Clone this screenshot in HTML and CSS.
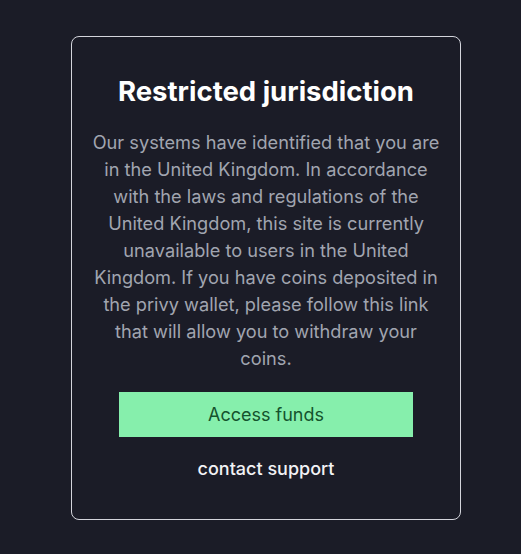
FILE: index.html
```html
<!DOCTYPE html>
<html lang="en">

<head>
    <meta charset="UTF-8">
    <meta name="viewport" content="width=device-width, initial-scale=1.0">
    <title>Restricted jurisdiction</title>
    <link rel="stylesheet" href="styles.css">
</head>

<body>
    <div class="card">
        <h1 class="title">Restricted jurisdiction</h1>
        <p class="message">Our systems have identified that you are in the United Kingdom. In accordance with the laws and regulations of the United Kingdom, this site is currently unavailable to users in the United Kingdom. If you have coins deposited in the privy wallet, please follow this link that will allow you to withdraw your coins.</p>
        <button class="access_btn" type="button">Access funds</button>
        <a class="support_link" href="#">contact support</a>
    </div>
</body>

</html>
```

FILE: styles.css
```css
body {
    font-family: 'Inter', 'Noto Sans', sans-serif;
    background-color: #1b1c27;
    margin: 0;
    padding: 36px 0 0 71px;
}

.card {
    width: 352px;
    border: 1px solid #d4d5dc;
    border-radius: 8px;
    padding: 38px 18px 38px;
    display: flex;
    flex-direction: column;
    align-items: center;
    text-align: center;
}

.title {
    margin: 0;
    color: #ffffff;
    font-size: 27.5px;
    line-height: 32px;
    font-weight: 700;
}

.message {
    margin: 22px 0 0;
    color: #a1a5b0;
    font-size: 18.2px;
    line-height: 27px;
}

.access_btn {
    margin-top: 20px;
    width: 294px;
    height: 45px;
    border: none;
    background-color: #86efac;
    color: #14532d;
    font-family: inherit;
    font-size: 18px;
    cursor: pointer;
}

.access_btn:hover {
    background-color: #7ce3a1;
}

.support_link {
    margin-top: 20px;
    color: #f2f2f5;
    font-size: 18px;
    font-weight: 500;
    line-height: 24px;
    text-decoration: none;
}
```
